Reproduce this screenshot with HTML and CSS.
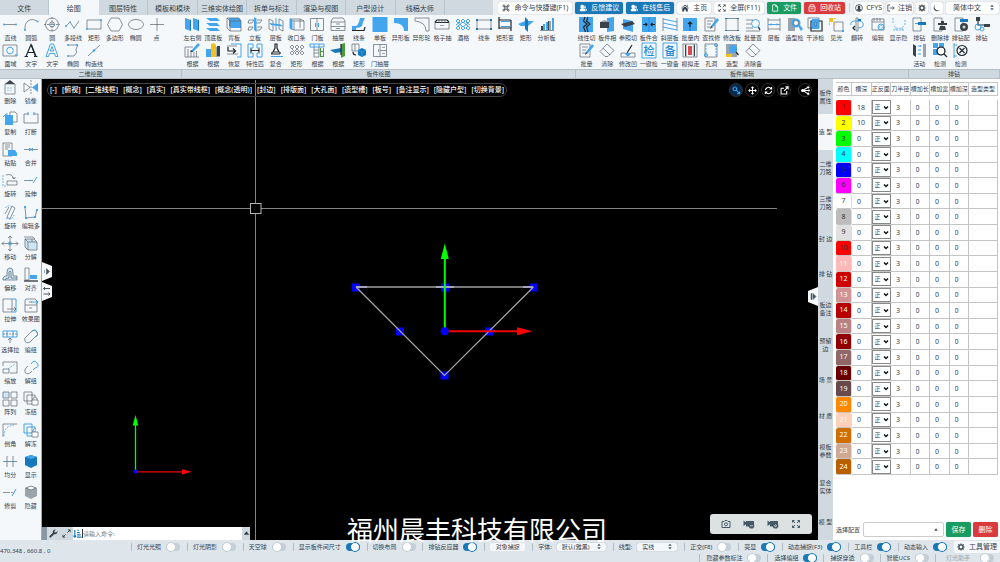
FILE: index.html
```html
<!DOCTYPE html>
<html lang="zh-CN">
<head>
<meta charset="utf-8">
<title>绘图</title>
<link rel="stylesheet" href="styles.css">
</head>
<body>
<div class="app">
  <header class="topbar">
    <nav class="tabs">
      <button class="tab">文件</button>
      <button class="tab tab-active">绘图</button>
      <button class="tab">图层特性</button>
      <button class="tab">模板和模块</button>
      <button class="tab">三维实体绘图</button>
      <button class="tab">拆单与标注</button>
      <button class="tab">渲染与视图</button>
      <button class="tab">户型设计</button>
      <button class="tab">线稿大师</button>
    </nav>
    <div class="actions">
      <button class="btn"><svg class="ico" viewBox="0 0 10 10"><path class="s" d="M3.500 3.500h3v3h-3zM3.500 3.500H2.300A1.200 1.200 0 1 1 3.500 2.300zM6.500 3.500V2.300A1.200 1.200 0 1 1 7.700 3.500zM6.500 6.500h1.200A1.200 1.200 0 1 1 6.500 7.700zM3.500 6.500v1.200A1.200 1.200 0 1 1 2.300 6.500z"/></svg>命令与快捷键(F1)</button>
      <button class="btn btn-blue"><svg class="ico" viewBox="0 0 10 10"><path class="f" d="M4.200 1a2 2.300 0 0 1 1.200 4.200L8 7v2H1V7l2-1.600A2.300 2.300 0 0 1 4.200 1zM7 2a1.600 1.800 0 0 1 .8 3.200L9.800 7v1.500H8.600V6.600L6.400 5z"/></svg>反馈建议</button>
      <button class="btn btn-blue"><svg class="ico" viewBox="0 0 10 10"><path class="f" d="M4.200 1a2 2.300 0 0 1 1.200 4.200L8 7v2H1V7l2-1.600A2.300 2.300 0 0 1 4.200 1zM7 2a1.600 1.800 0 0 1 .8 3.200L9.800 7v1.500H8.600V6.600L6.400 5z"/></svg>在线售后</button>
      <button class="btn"><svg class="ico" viewBox="0 0 10 10"><path class="f" d="M5 2.800 8.500 6v3.500H6V6.800H4v2.700H1.500V6z"/><path class="s" d="M.5 5.200 5 1.200l4.500 4M7.800 1v2.200"/></svg>主页</button>
      <button class="btn"><svg class="ico" viewBox="0 0 10 10"><path class="s" d="M1 3.300V1h2.300M1 1l3 3M9 3.300V1H6.700M9 1 6 4M1 6.700V9h2.300M1 9l3-3M9 6.700V9H6.700M9 9 6 6"/></svg>全屏(F11)</button>
      <button class="btn btn-green"><svg class="ico" viewBox="0 0 10 10"><path class="s" d="M2 1h4l2.300 2.300V9H2zM6 1v2.500h2.300"/></svg>文件</button>
      <button class="btn btn-red"><svg class="ico" viewBox="0 0 10 10"><path class="s" d="M1.200 3.500h7.600V9H1.200zM2.500 3.500V1h5v2.500M3 6h4"/></svg>回收站</button>
      <span class="divider"></span>
      <button class="btn btn-user"><svg class="ico" viewBox="0 0 10 10"><circle class="s" cx="5" cy="5" r="4.300"/><path class="f" d="M5 2a1.700 1.900 0 0 1 1 3.400L8 7.500Q5 10 2 7.500L4 5.400A1.700 1.900 0 0 1 5 2z"/></svg>CFYS</button>
      <button class="btn btn-user"><svg class="ico" viewBox="0 0 10 10"><path class="s" d="M4 1.200H1v7.600h3M3.500 5H9M7 3l2 2-2 2"/></svg>注销</button>
      <button class="btn btn-icon" aria-label="设置"><svg class="ico" viewBox="0 0 10 10"><circle class="s thick" cx="5" cy="5" r="2.600"/><path class="s thick" d="M5 .5v1.500M5 8v1.500M.5 5H2M8 5h1.500M1.800 1.800l1 1M7.200 7.200l1 1M1.800 8.200l1-1M7.200 2.800l1-1"/></svg></button>
      <button class="btn btn-icon" aria-label="夜间模式"><svg class="ico" viewBox="0 0 10 10"><path class="f" d="M3 1a3.800 3.800 0 0 0 6 5.500A4.300 4.300 0 1 1 3 1z"/></svg></button>
      <div class="pick pick-lang">
        <select aria-label="语言"><option>简体中文</option></select>
        <svg class="updown" viewBox="0 0 6 10"><path d="M3 1 5.500 4h-5zM3 9 5.500 6h-5z"/></svg>
      </div>
    </div>
  </header>

  <section class="ribbon">
    <div class="group group-2d">
      <div class="tools" id="tools-2d"></div>
      <h2 class="group-title">二维绘图</h2>
    </div>
    <div class="group group-board">
      <div class="tools" id="tools-board"></div>
      <h2 class="group-title">板件绘图</h2>
    </div>
    <div class="group group-edit">
      <div class="tools" id="tools-edit"></div>
      <h2 class="group-title">板件编辑</h2>
    </div>
    <div class="group group-drill">
      <div class="tools" id="tools-drill"></div>
      <h2 class="group-title">排钻</h2>
    </div>
  </section>

  <main class="workspace">
    <aside class="sidebar" id="sidebar"></aside>

    <section class="canvas">
      <svg class="drawing" viewBox="42 79 776 461" preserveAspectRatio="xMinYMin slice">
        <path class="cross" d="M255.500 80V203M255.500 214V540M42 208.500H250M261 208.500H777"/>
        <rect class="pickbox" x="250.500" y="203.500" width="10.500" height="10"/>
        <path class="grip" d="M352 283.500h8v8h-8zM529.500 283.500h8v8h-8zM441 283.500h8v8h-8zM396 327.500h8v8h-8zM485 327.500h8v8h-8zM440.500 371.500h8v8h-8z"/>
        <path class="edge-top" d="M356 287H533"/>
        <path class="edge-glow" d="M356 287H367M436 287H454M523 287H533"/>
        <path class="edge" d="M356 287 444.500 375.500 533.500 287"/>
        <path class="axis-y" d="M444.800 328V256"/>
        <path class="head-y" d="M444.800 243.500 448.800 259h-8z"/>
        <path class="axis-x" d="M448 331.300H518"/>
        <path class="head-x" d="M532.500 331.300 517 327.300v8z"/>
        <circle class="origin" cx="444.700" cy="331.300" r="4"/>
        <path class="axis-y thin" d="M135.500 471V424"/>
        <path class="head-y" d="M135.500 415 138.300 425.500h-5.600z"/>
        <path class="axis-x thin" d="M137 471.800H183"/>
        <path class="head-x" d="M192 471.800 182 469.200v5.200z"/>
        <circle class="origin" cx="135.500" cy="471.600" r="2.200"/>
      </svg>

      <div class="viewbar">
        <button>[-]</button><button>[俯视]</button><button>[二维线框]</button><button>[概念]</button><button>[真实]</button><button>[真实带线框]</button><button>[概念(透明)]</button><button>[封边]</button><button>[排版面]</button><button>[大孔面]</button><button>[造型槽]</button><button>[板号]</button><button>[备注显示]</button><button>[隐藏户型]</button><button>[切换背景]</button>
      </div>

      <div class="viewtools">
        <button class="round round-on" aria-label="选择"><svg viewBox="0 0 10 10"><circle cx="3.200" cy="3.200" r="2"/><path d="M4.700 4.700 8.500 8.500M8.500 6v2.500H6"/></svg></button>
        <button class="round" aria-label="平移"><svg viewBox="0 0 10 10"><path d="M5 1v8M1 5h8M3.800 2.200 5 1l1.200 1.200M3.800 7.800 5 9l1.200-1.200M2.200 3.800 1 5l1.200 1.200M7.800 3.800 9 5 7.800 6.200"/></svg></button>
        <button class="round" aria-label="旋转"><svg viewBox="0 0 10 10"><path d="M1.500 4.500A3.600 3.600 0 0 1 8 3M8.500 5.500A3.600 3.600 0 0 1 2 7M8.500 1v2.300H6.200M1.500 9V6.700h2.300"/></svg></button>
        <button class="round" aria-label="新窗口"><svg viewBox="0 0 10 10"><path d="M4.500 2.500H1.200v6.300h6.300V5.500M4.500 5.500 8.800 1.200M6 1h3v3"/></svg></button>
        <button class="round round-last" aria-label="分享"><svg viewBox="0 0 10 10"><path d="M2 5H8M2 5 7.500 1.500M2 5l5.500 3.500"/><circle class="dot" cx="1.800" cy="5" r="1.700"/><circle class="dot" cx="8" cy="1.500" r="1.300"/><circle class="dot" cx="8.700" cy="5" r="1.200"/><circle class="dot" cx="8" cy="8.500" r="1.300"/></svg></button>
      </div>

      <div class="handles-left">
        <button class="handle" aria-label="展开左侧"><svg viewBox="0 0 10 19"><path class="plate" d="M0 0 10 4v11L0 19z"/><path class="mark" d="M2.500 8v3M4.500 6.500v6L7.500 9.500z"/></svg></button>
        <button class="handle" aria-label="切换方向"><svg viewBox="0 0 10 19"><path class="plate" d="M0 0 10 4v11L0 19z"/><path class="mark-line" d="M1.500 6.500H8M3 5 1.500 6.500 3 8M1.500 12H8M6.500 10.500 8 12 6.500 13.500"/></svg></button>
      </div>
      <button class="handle handle-right" aria-label="展开右侧"><svg viewBox="0 0 10 19"><path class="plate" d="M10 0 0 4v11l10 4z"/><path class="mark" d="M3 6.500h1v6H3zM5 6.500v6L8 9.500z"/></svg></button>

      <div class="command">
        <span class="grab"></span>
        <button class="cmd-btn" aria-label="设置命令行"><svg viewBox="0 0 10 10"><path class="f" d="M9.300 2.300 7.800 3.800 6.300 3.500 6 2.100 7.500.7A2.700 2.700 0 0 0 4.300 4.200L.7 7.800A1 1 0 0 0 2.200 9.300L5.800 5.700A2.700 2.700 0 0 0 9.300 2.300z"/></svg></button>
        <button class="cmd-btn" aria-label="展开命令行"><svg viewBox="0 0 10 10"><path class="s" d="M6 4 9 1M6.500 1H9v2.500M4 6 1 9M1 6.500V9h2.500"/></svg></button>
        <div class="cmd-field">
          <svg viewBox="0 0 10 10"><path class="blue" d="M2 1v8M.5 7.500 2 9l1.500-1.500M4.500 9h5M4.500 6.500h4M4.500 4h3M5 1.500h1.500"/></svg>
          <input type="text" aria-label="命令" placeholder="请输入命令:">
        </div>
        <button class="cmd-up" aria-label="历史命令"><svg viewBox="0 0 10 10"><path class="f" d="M5 2.500 8 6.500H2z"/></svg></button>
      </div>

      <div class="camera">
        <button aria-label="拍照"><svg viewBox="0 0 12 10"><path class="s" d="M2 2.500h2l1-1h2l1 1h2v6H2z"/><circle class="s" cx="6" cy="5.300" r="1.500"/></svg></button>
        <button aria-label="开始录像"><svg viewBox="0 0 12 10"><path class="f" d="M3 2h8v3.500H6V7.500H3zM.5 1.500 3 3.200v2L.5 7z"/><circle class="f" cx="8.500" cy="6.800" r="2.800"/><path class="p" d="M7 6.800h3"/></svg></button>
        <button aria-label="录像设置"><svg viewBox="0 0 12 10"><path class="f" d="M3 2h8v3.500H6V7.500H3zM.5 1.500 3 3.200v2L.5 7z"/><circle class="f" cx="8.500" cy="6.800" r="2.800"/><circle class="p" cx="8.500" cy="6.800" r=".9"/></svg></button>
        <button aria-label="全屏画布"><svg viewBox="0 0 12 10"><path class="s" d="M2.500 3.500V1.500h2M2.500 1.500 5 4M9.500 3.500V1.500h-2M9.500 1.500 7 4M2.500 6.500v2h2M2.500 8.500 5 6M9.500 6.500v2h-2M9.500 8.500 7 6"/></svg></button>
      </div>
      <p class="caption">福州晨丰科技有限公司</p>
    </section>

    <nav class="side-tabs">
      <button class="side-tab">板件<br>属性</button>
      <button class="side-tab side-tab-active">造 型</button>
      <button class="side-tab">二维<br>刀路</button>
      <button class="side-tab">三维<br>刀路</button>
      <button class="side-tab">封 边</button>
      <button class="side-tab">排 钻</button>
      <button class="side-tab">板边<br>备注</button>
      <button class="side-tab">预留<br>边</button>
      <button class="side-tab">场 景</button>
      <button class="side-tab">材 质</button>
      <button class="side-tab">模板<br>参数</button>
      <button class="side-tab">复合<br>实体</button>
      <button class="side-tab">模 型</button>
    </nav>

    <section class="panel">
      <table class="grooves">
        <colgroup><col class="c-color"><col class="c-num"><col class="c-num"><col class="c-num"><col class="c-num"><col class="c-num"><col class="c-num"><col class="c-type"></colgroup>
        <thead><tr><th><span>颜色</span></th><th><span>槽深</span></th><th><span>正反面</span></th><th><span>刀半径</span></th><th><span>槽加长</span></th><th><span>槽加宽</span></th><th><span>槽加深</span></th><th><span>造型类型</span></th></tr></thead>
        <tbody id="groove-rows"></tbody>
      </table>
      <div class="config">
        <label for="config">选择配置</label>
        <div class="pick pick-config">
          <select id="config"><option></option></select>
          <svg class="updown" viewBox="0 0 10 10"><path d="M5 3 8 7H2z"/></svg>
        </div>
        <button class="btn btn-green btn-form">保存</button>
        <button class="btn btn-red btn-form">删除</button>
      </div>
    </section>
  </main>

  <footer class="status">
    <output class="coords">470.348 , 660.8 , 0</output>
    <div class="status-rows">
      <div class="status-row">
        <label class="opt">灯光光照<input type="checkbox" role="switch"></label>
        <label class="opt">灯光阴影<input type="checkbox" role="switch"></label>
        <label class="opt">天空球<input type="checkbox" role="switch"></label>
        <label class="opt">显示板件间尺寸<input type="checkbox" role="switch" checked></label>
        <label class="opt">切换布局<input type="checkbox" role="switch"></label>
        <label class="opt">排钻反应器<input type="checkbox" role="switch" checked></label>
        <div class="opt"><button class="snap">对象捕捉</button></div>
        <div class="opt"><label for="font">字体:</label>
          <div class="pick pick-font"><select id="font"><option>默认(雅黑)</option></select><svg class="updown" viewBox="0 0 6 10"><path d="M3 1 5.500 4h-5zM3 9 5.500 6h-5z"/></svg></div></div>
        <div class="opt"><label for="line">线型:</label>
          <div class="pick pick-line"><select id="line"><option>实线</option></select><svg class="updown" viewBox="0 0 6 10"><path d="M3 1 5.500 4h-5zM3 9 5.500 6h-5z"/></svg></div></div>
        <label class="opt">正交(F8)<input type="checkbox" role="switch"></label>
        <label class="opt">亮显<input type="checkbox" role="switch" checked></label>
        <label class="opt">动态捕捉(F3)<input type="checkbox" role="switch" checked></label>
        <label class="opt">工具栏<input type="checkbox" role="switch" checked></label>
        <label class="opt">动态输入<input type="checkbox" role="switch" checked></label>
        <button class="btn btn-manage"><svg class="ico" viewBox="0 0 10 10"><circle class="s thick" cx="5" cy="5" r="2.600"/><path class="s thick" d="M5 .5v1.500M5 8v1.500M.5 5H2M8 5h1.500M1.800 1.800l1 1M7.200 7.200l1 1M1.800 8.200l1-1M7.200 2.800l1-1"/></svg>工具管理</button>
      </div>
      <div class="status-row status-row-end">
        <label class="opt">隐藏参数标注<input type="checkbox" role="switch"></label>
        <label class="opt">选择编组<input type="checkbox" role="switch" checked></label>
        <label class="opt">捕捉穿透<input type="checkbox" role="switch"></label>
        <label class="opt">智能UCS<input type="checkbox" role="switch"></label>
        <label class="opt opt-off">灯光助手<input type="checkbox" role="switch" disabled></label>
      </div>
    </div>
  </footer>
</div>
<script src="app.js"></script>
</body>
</html>
```

FILE: styles.css
```css
* { box-sizing: border-box; }

body {
  margin: 0;
  font: 6px/8px "Noto Sans", "Noto Sans CJK SC", sans-serif;
  color: #34414c;
  background: #dee5eb;
}

button, select, input {
  margin: 0;
  padding: 0;
  border: 0;
  border-radius: 0;
  background: none;
  font: inherit;
  color: inherit;
}

button { white-space: nowrap; cursor: pointer; }
svg { display: block; overflow: visible; }
.s { fill: none; stroke: currentColor; stroke-width: 1; }
.thick { stroke-width: 1.5; }
.f { fill: currentColor; }

.app {
  display: grid;
  grid-template-rows: auto auto minmax(0, 1fr) auto;
  height: 100vh;
}

/* Top bar */
.topbar {
  display: flex;
  justify-content: space-between;
  height: 15px;
  background: #cfd9df;
  font-size: 7px;
  line-height: 10px;
}
.tabs { display: flex; flex: 0 1 445px; }
.tab { flex: 1; border-right: 1px solid #b9c5cc; padding-top: 2px; }
.tab-active { background: #f4f8fb; border-color: #f4f8fb; }
.actions { display: flex; align-items: center; gap: 3px; padding: 0 1px 0 50px; background: linear-gradient(90deg, #cfd9df 45px, #edf1f4 45px); }
.btn {
  display: flex;
  align-items: center;
  justify-content: center;
  gap: 4px;
  height: 12px;
  padding: 0 4px;
  border-radius: 2px;
  background: #fff;
  box-shadow: 0 0 1px #8b979f;
}
.ico { width: 8px; height: 8px; }
.btn-blue { background: #1978b8; color: #fff; }
.btn-green { background: #1a9c60; color: #fff; }
.btn-red { background: #db3a3d; color: #fff; }
.btn-user { padding: 0 1px; gap: 3px; }
.btn-icon { padding: 0 2px; }
.divider { width: 1px; height: 9px; margin: 0 1px; background: #c9d1d6; }

.pick { display: grid; align-items: center; background: #fff; border-radius: 2px; box-shadow: 0 0 1px #8b979f; }
.pick select { grid-area: 1 / 1; appearance: none; width: 100%; height: 100%; }
.updown { grid-area: 1 / 1; justify-self: end; width: 6px; height: 7px; margin-right: 4px; pointer-events: none; fill: #445460; }
.pick-lang { width: 53px; height: 12px; }
.pick-lang select { padding-left: 7px; }

/* Ribbon */
.ribbon { display: grid; grid-template-columns: 182fr 394fr 333fr 91fr; background: #f4f8fb; }
.tools {
  display: grid;
  grid-template-rows: 25px 25px;
  row-gap: 1px;
  height: 54px;
  padding-top: 2px;
}
.group-2d .tools { grid-template-columns: repeat(8, 1fr); padding-right: 15px; }
.group-board .tools { grid-template-columns: repeat(18, 1fr); padding-right: 19px; }
.group-edit .tools { grid-template-columns: repeat(16, 1fr); }
.group-drill .tools { grid-template-columns: repeat(4, 1fr); padding-right: 8px; }
.tool {
  display: flex;
  flex-direction: column;
  align-items: center;
  gap: 2px;
  min-width: 0;
}
.tool-first { grid-column-start: 1; }
.tool svg { flex: none; width: 16px; height: 15px; }
.group-title {
  margin: 0;
  height: 10px;
  border: solid #b4c0c7;
  border-width: 1px 1px 1px 0;
  background: #cfd9df;
  font-size: 6px;
  line-height: 8px;
  font-weight: 400;
  text-align: center;
}

/* Tool glyphs */
.k, .b, .d, .D, .l, .t { fill: none; stroke: #59646d; stroke-width: 0.7; }
.b { stroke: #349be4; stroke-width: 0.9; }
.t { stroke: #20272d; stroke-width: 1.2; }
.d { stroke: #349be4; stroke-dasharray: 2 1; }
.D { stroke-dasharray: 2 1; }
.l { fill: #cfe6f8; }
.B { fill: #42a5ee; }
.N { fill: #1579bc; }
.K { fill: #3a434a; }
.g { fill: #9aa4aa; }
.w { fill: #fff; stroke: #59646d; stroke-width: 0.7; }
.r { fill: #d94a4a; }
.y { fill: #f2c11f; }
.G { fill: #4c9a3f; }
.glyph { fill: #2288d2; font-size: 11px; font-weight: 500; text-anchor: middle; }

/* Workspace */
.workspace { display: grid; grid-template-columns: 42px minmax(0, 1fr) 15px 167px; min-height: 0; }
.sidebar {
  display: grid;
  grid-template-columns: 1fr 1fr;
  grid-auto-rows: 1fr;
  padding: 1px 0 24px;
  border-right: 1px solid #9faab1;
  background: #f4f8fb;
  overflow: hidden;
}

.canvas { position: relative; background: #000; min-height: 0; }
.drawing { position: absolute; inset: 0; width: 100%; height: 100%; }
.cross { fill: none; stroke: #858585; }
.pickbox { fill: #000; stroke: #b4b4b4; }
.grip, .origin { fill: #0000ff; }
.edge, .edge-top, .edge-glow { fill: none; stroke: #aaa; stroke-width: 1.2; }
.edge-top { stroke: #777; stroke-width: 2; }
.edge-glow { stroke: #d4d4ff; }
.axis-y { stroke: #00ff00; stroke-width: 2; }
.axis-x { stroke: #f00000; stroke-width: 2; }
.thin { stroke-width: 1.3; }
.head-y { fill: #00ff00; }
.head-x { fill: #ff0000; }

.viewbar {
  position: absolute;
  top: 4px;
  left: 5px;
  display: flex;
  align-items: center;
  gap: 5px;
  height: 14px;
  padding: 0 2px;
  border: 1px solid #444;
  border-radius: 7px;
  color: #fff;
  font-size: 7px;
  line-height: 10px;
  font-weight: 500;
}
.viewtools { position: absolute; top: 4px; right: 6px; display: flex; gap: 2px; }
.round {
  display: grid;
  place-items: center;
  width: 14px;
  height: 14px;
  border: 1px solid #333;
  border-radius: 50%;
}
.round svg { width: 9px; height: 9px; fill: none; stroke: #fff; stroke-width: 1.2; }
.round .dot { fill: #fff; stroke: none; }
.round-on { background: #08294a; }
.round-on svg { stroke: #39a2ee; }
.round-last { margin-left: 5px; }

.handles-left { position: absolute; top: 183px; left: 0; display: grid; gap: 1px; }
.handle svg { width: 10px; height: 19px; }
.handle-right { position: absolute; top: 208px; right: 0; }
.plate { fill: #f4f8fb; }
.mark { fill: #445460; stroke: #445460; stroke-width: 0.5; }
.mark-line { fill: none; stroke: #445460; }

.command {
  position: absolute;
  left: 0;
  bottom: 0;
  display: flex;
  align-items: stretch;
  width: 208px;
  height: 13px;
  background: #cfd9df;
}
.grab { width: 5px; background: #8798a4; }
.cmd-btn, .cmd-up { display: grid; place-items: center; width: 13px; }
.cmd-up { width: 8px; }
.command svg { width: 9px; height: 9px; }
.cmd-field { display: flex; flex: 1; align-items: center; background: #fff; }
.cmd-field input { flex: 1; min-width: 0; height: 9px; outline: 0; border-left: 1px solid #333; }
.cmd-field input::placeholder { color: #777; opacity: 1; }
.blue { fill: none; stroke: #1978b8; stroke-width: 1.3; }

.camera {
  position: absolute;
  right: 6px;
  bottom: 6px;
  display: flex;
  justify-content: space-around;
  align-items: center;
  width: 102px;
  height: 20px;
  padding: 0 4px;
  border-radius: 3px;
  background: #dce1e2;
  color: #445a68;
}
.camera svg { width: 12px; height: 10px; }
.p { fill: none; stroke: #dce1e2; stroke-width: 0.8; }
.caption {
  position: absolute;
  left: 305px;
  bottom: -2px;
  z-index: 2;
  margin: 0;
  color: #fff;
  font: 26px/26px "Noto Sans CJK SC", sans-serif;
  white-space: nowrap;
  pointer-events: none;
}

.side-tabs { display: grid; grid-auto-rows: 1fr; background: #cfd9df; }
.side-tab { min-height: 0; }
.side-tab-active { background: #f4f8fb; }

/* Groove table */
.panel { display: flex; flex-direction: column; justify-content: space-between; padding: 3px 2px 2px 3px; background: #fff; }
.grooves { width: 100%; height: 393px; table-layout: fixed; border-collapse: separate; border-spacing: 0; }
.c-color { width: 16px; }
.c-type { width: 29px; }
.grooves th, .grooves td { padding: 0; }
.grooves th { height: 18px; font-weight: 400; vertical-align: top; white-space: nowrap; }
.grooves th span { display: block; height: 14px; border: solid #c6c6c6; border-width: 1px 1px 1px 0; line-height: 13px; }
.grooves td { border: solid #c4c4c4; border-width: 0 1px 1px 0; font-size: 7px; line-height: 8px; }
.grooves .swatch { border-radius: 2px; border-right-color: #ddd; text-align: center; color: #333; }
.grooves .swatch-light { color: #fff; }
.grooves td input { display: block; width: 100%; height: 12px; padding-left: 5px; outline: 0; }
.side { display: grid; align-items: center; margin-right: -1px; border: 1px solid #888; }
.side select { grid-area: 1 / 1; appearance: none; width: 100%; height: 12px; padding-left: 2px; font-size: 6px; }
.side svg { grid-area: 1 / 1; justify-self: end; width: 6px; height: 5px; margin-right: 1px; pointer-events: none; fill: none; stroke: #111; stroke-width: 1.5; }

.config { display: flex; align-items: center; gap: 2px; height: 17px; }
.config label { width: 25px; white-space: nowrap; }
.pick-config { flex: 1; height: 15px; border: 1px solid #ccc; box-shadow: none; }
.btn-form { height: 15px; width: 25px; font-size: 7px; }

/* Status bar */
.status { display: flex; align-items: stretch; height: 22px; background: #dee5eb; }
.coords { flex: none; width: 131px; line-height: 22px; }
.status-rows { flex: 1; display: grid; grid-template-rows: 13px 9px; min-width: 0; }
.status-row { display: flex; align-items: center; justify-content: space-between; white-space: nowrap; }
.status-row-end { justify-content: flex-end; }
.opt { display: flex; align-items: center; gap: 5px; padding: 0 5px; border-left: 1px solid #b3bdc4; }
.opt input {
  appearance: none;
  display: flex;
  align-items: center;
  width: 14px;
  height: 8px;
  padding: 0;
  border-radius: 4px;
  background: #c3ced6;
}
.opt input::before { content: ""; width: 8px; height: 8px; border: 1px solid #c3ced6; border-radius: 50%; background: #fff; }
.opt input:checked { justify-content: flex-end; background: #1978b8; }
.opt input:checked::before { border-color: #1978b8; }
.status-row-end .opt { padding: 0 6px; }
.status-row-end .opt-off { padding-left: 10px; gap: 10px; color: #9ca8b0; }
.snap { width: 35px; height: 8px; border-radius: 2px; background: #f4f8fb; }
.pick-font, .pick-line { height: 8px; background: #f4f8fb; }
.pick-font { width: 49px; }
.pick-line { width: 40px; }
.pick-font select, .pick-line select { padding-left: 5px; line-height: 8px; }
.btn-manage { padding: 0 3px; font-size: 7px; box-shadow: none; background: #f4f8fb; }
```

FILE: app.js
```js
// Each glyph is a list of "class path" parts on a 16x15 grid.
// "@cx cy r" draws a circle, "T" draws a character.
const glyphs = {
  line: ["k M2 7.500H14", "B @2 7.500 1", "B @14 7.500 1"],
  arc: ["k M2 13C1 5 7 0 14 4", "B @2 13 1", "B @14.500 4.500 1"],
  circle: ["k @8 7.500 6.500", "k @8 7.500 2.500", "D M8 0V15M0 7.500H16", "B @8 7.500 .8"],
  poly: ["k M1 9 5 5 9 11 14 4", "B @1 9 1", "B @5 5 .8", "B @9 11 .8"],
  rect: ["k M1 3H15V12H1z", "B @1 12 1", "B @15 3 1"],
  hex: ["k M4 1H12L15.500 7.500 12 14H4L.5 7.500z"],
  ellipse: ["k M.5 7.500A7.500 5 0 0 1 15.500 7.500 7.500 5 0 0 1 .5 7.500"],
  point: ["k M8 1V14M1 7.500H15"],
  region: ["k M1 2H15V13H1z", "b @8 7.500 3.300", "B @14 12 1"],
  textA: ["t M3 13.500 8 1.500 13 13.500M5 9.500H11M1.500 13.500H5M11 13.500h3.500", "t M8.500 2 12.500 13.500"],
  textB: ["b M2 13.500 6.500 1H9.500L14 13.500H11.500L10.500 10.500H5.500L4.500 13.500zM6.200 8H9.800L8 3.500z"],
  curve: ["k M3 2H13L11 6Q13 10 9 13H3", "B @3 2 1", "B @12 2 1", "B @3 13 1"],
  xline: ["k M2 13 14 2", "B @8 7.500 1.300"],
  sides: ["B M1 1 7 3V14L1 12zM9 1 15 3V14L9 12z", "N M6 2.700 7 3V14L6 13.600zM14 2.700 15 3V14L14 13.600z"],
  shelves: ["B M1 1H12L15 4H5zM1 6H12L15 9H5zM1 11H12L15 14H5z"],
  back: ["B M3 1H13L15 4V11H5L3 9z", "k M1 1H13L15 4V14H4L1 11zM1 1 4 4H15M4 4V14"],
  stand: ["k M2 3H7L5 6H1zM10 3h5L13 6H9M2 10H6L4 13H1zM10 10h5l-2 3H9", "B M7 0 9.500 1.500V15L7 13z"],
  layer: ["k M1 2 5 4V14L1 12zM11 2 15 4V14L11 12z", "B M1 6 13 7.500 15 9.500 3 8z", "b M8 1V14"],
  closing: ["k M1 2H11L15 4V13H5L1 11zM5 4H15M5 4V13M1 2 5 4M11 2V11", "B M1 2 3.500 3V13L1 12z"],
  door: ["k M1.500 1.500H14.500V13.500H1.500zM8 1.500V13.500", "B M6 6H7V10H6zM9 6H10V10H9z"],
  drawer: ["k M3 1H13L15 4V13.500H1V4zM1 5H15M1 9.500H15M6 7H10M6 11.500H10"],
  mold: ["B M9 1H14L12 5 11 9Q9 11 5 11V13.500H1V9H5Q7 8 8 5z", "t M1 13.500H13L14 10"],
  single: ["B M.5 0H15.500V15H.5z"],
  shape: ["B M1 1H15V14H11Q11 6 1 6z"],
  shapeO: ["k M1 1H15V14H12Q12 5 1 4z"],
  grid: ["t M1 5 3 3H13L15 5M1 5.500H15", "k M1 5V12H15V5M5 2V6M8 2V6M11 2V6", "g M6 8H10V9H6z"],
  wine: ["b M1 4 3 2 5 4 3 6zM6 4 8 2 10 4 8 6zM11 4 13 2 15 4 13 6zM1 11 3 9 5 11 3 13zM6 11 8 9 10 11 8 13zM11 11 13 9 15 11 13 13zM3 6 8 10 13 6M1 8 5 5M15 8 11 5M3 9 8 5 13 9"],
  strip: ["k M1 3H15V12H1z", "N M0 2H2V4H0zM14 2H16V4H14zM0 11H2V13H0zM14 11H16V13H14z"],
  change: ["t M2 0V12M14 3V14M2 3H14M2 11H14", "B M4 4H13V5H4zM4 9H13V10H4z"],
  cross: ["B M0 7 7 4H16L10 9H3z", "N M7 0 10 3V15L7 12z"],
  chart: ["k M1 13.500H15", "B M4 7H6V13H4zM7 5H9V13H7zM13 1H15V13H13z", "K M2 9H4V13H2zM9 4H10V13H9z", "g M10 4H12V13H10z"],
  fig1: ["k M1 4V14H15M4 6V14M7 7V14M10 9V14M12.500 8V14M1 4H9", "B M7 8 14 0 16 2 9 9z", "K M6 9 8 7 9 9z"],
  fig2: ["B M1 6H6V14H1z", "y M6 1 9 0 11 2V14H6z", "g M11 4H15V14H11z", "K M12 3H15V13H12z"],
  restore: ["b M5 1H15V14H11", "k M1 3H11M1 11H12", "t M2 4V8H9M7 5.500 9.500 8 7 10.500"],
  match: ["b M6 1H1V14H6V10H3M10 1H15V14H10V10H13M6 1V5H3M10 1V5H13", "t M4 7.500H12M4 5.500V9.500M12 5.500V9.500"],
  compound: ["t M7 1H9L9 5 11 9H5L7 5zM3 11H12", "B M3 13H15V14H3z", "t M4 9V11M12 9V11"],
  mesh: ["k M1 4 3 2 5 4 3 6zM6 4 8 2 10 4 8 6zM11 4 13 2 15 4 13 6zM1 10 3 8 5 10 3 12zM6 10 8 8 10 10 8 12zM11 10 13 8 15 10 13 12zM3 6 5.500 8.500 8 6 10.500 8.500 13 6"],
  shelf1: ["b M1 1H15V4H1z", "k M5 4V14H10V4M5 7H10M5 10H10", "b M5 1V4M10 1V4", "G M11 5H12V14H11zM14 5H15V14H14zM12 8H14V9H12zM12 13H14V14H12z"],
  shelf2: ["G M11 1 15 0V13L11 15z", "N M0 7 11 5 12 9 5 10z", "t M11 1V12"],
  hang: ["k M1 1H8V8H1zM4 1V8", "N M7 7 11 5 15 7V12L11 14 7 12z", "b M7 7 11 9 15 7M11 9V14", "t M2 9Q2 12 5 12"],
  doordraw: ["k M1.500 1.500H14.500V13.500H1.500zM8 1.500V13.500M8 7.500H14.500", "g M6 6H7V9H6zM10 4H13V5H10zM10 10H13V11H10z"],
  cut: ["B M1 0H15V15H1z", "t M7 0 5.500 4 9 7 5.500 10 7.500 15M10 0 8.500 4 12 7 8.500 10 10 15"],
  cut2: ["B M8 1 15 0V14L8 15z", "g M1 5 5 3 10 4 8 6z", "K M1 5H10V11H1z"],
  cut3: ["B M3 2 13 4V15L3 12z", "K M1 7 12 4 15 7 5 10z"],
  join: ["B M1 0H15V15H1z", "t M2 7.500H6M4.500 6 6 7.500 4.500 9M14 7.500H10M11.500 6 10 7.500 11.500 9", "N M7.700 0H8.300V15H7.700z"],
  slant: ["k M1 1V14M15 1V14", "b M1 2 15 5M1 6 15 9M1 10 15 13"],
  inner: ["B M1 1H15V14H1z", "N M7.500 6H8.500V14H7.500z", "t M8 5V10M6 7 8 5 10 7"],
  find: ["k M2 1H12V14H2zM4 4H10M4 7H8M4 10H8", "B M8 9 14 1 16 3 10 10z", "K M7 12 8 9 10 10z"],
  modify: ["k M2 1.500H14V13.500H2z", "N M1 1H3V2H1zM13 1H15V2H13zM1 13H3V14H1zM13 13H15V14H13z"],
  search: ["k M1 3H8M1 7H6M1 11H8M1 14H15", "b @10.500 6.500 4", "t M13.500 10 15 13"],
  ply: ["k M2 1V14M14 1V14M2 3H14M2 12H14", "b M2 7.500H14", "B @5 7.500 1", "B @11 7.500 1"],
  erase: ["k M8 1 15 7.500 9 13.500H6L1 8.500zM4 5 11 12"],
  groove: ["k M1 10H5Q6 13 9 12L11 10H15V14H1z", "B M5 10H11L9 13H7z", "t M7 10 12 2"],
  jian: ["b M1 0H15V15H1z", "T 检"],
  bei: ["b M1 0H15V15H1z", "T 备"],
  sim: ["k M1 1H15V14H1zM4 1V14M12 1V14", "K M3 2H4V13H3zM12 2H13V13H12z", "r M6 3H10V12H6z"],
  hole: ["k M2 1H14V14H2z", "d M3 2V13M13 2V13", "b @3 12 1.500", "b @13 2 1.500"],
  shapeq: ["g M2 1H13V14H2z", "y M2 11H8V14H2z", "B @9 6 4", "t M12 9 14.500 12"],
  shapec: ["g M1 1H8V14H1z", "B @9 6 4.500", "w @9 6 2.500", "B M11 9 13 8 16 12 14 14z"],
  clash: ["k M1 1H12V11H1z", "t M4 4H15V14H4z", "B M5 2H12V12H5z", "w M8 5h1v4h-1z"],
  light: ["k M6 5H15V14H6z", "y M1 1H5V5H1zM6 1H8V2H6zM1 6H2V8H1zM5 5 8 7 7 8z", "B M14 13H16V15H14z"],
  flip: ["k M7 1H9V14H7z", "b M2 8Q1 4 6 4H11Q15 5 14 9Q13 11 9 11", "t M6 9 4 11 6 13", "N M9 2H12V4H9z"],
  edit: ["k M2 2H14V13H2zM2 5H14M4 1V4M7 1V4M10 1V4", "b @11 10 3", "d @11 10 1.500"],
  show: ["d M2 1V6M14 3V8M3 9Q8 14 13 9", "d M2 13H14M5 11V14M11 11V14"],
  drill: ["k M2 1H10V14H2z", "N M7 5H15V8H7z", "B M4 6H7V7H4z"],
  drilldel: ["k M2 1H10V14H2z", "K M6 6H15V8H6zM8 9H13L14 13H7zM9 4H12V6H9z"],
  drillset: ["k M2 1H10V14H2z", "N M7 2H15V5H7z", "K @11 10 4", "w @11 10 1.500"],
  drill3: ["K M2 0H6V4H2zM10 7H16V10H10z", "t M4 4V8H10", "b @4 10 3", "b @8 12 2"],
  active: ["K M2 1 5 3V14L2 12z", "g M12 1H15V14H12z", "b M7 3H10M7 7H10M7 11H10", "B M9 2 11 3 9 4z"],
  check1: ["B M1 0H6V5H1zM7 0H12V5H7zM1 6H6V12H1z", "w @9 8 4", "t @9 8 4", "t M12 11 15 14"],
  check2: ["b M1 0V15M1 2H4M1 13H4", "t @9 7.500 5", "t M6.500 5 11.500 10M11.500 5 6.500 10"],
  trash: ["K M3 4 8 0 13 4z", "k M3 4H13V14H3z", "d M6 7V11M9 7V11"],
  mirror: ["w M1 3 7 7.500 1 12z", "B M15 3 9 7.500 15 12z", "D M8 0V15"],
  copy: ["w M8 1H13L15 3V11H8z", "B M3 4H11V14H3z", "b M1 6 4 3H6"],
  brk: ["k M6 3H1V12H15V3H10", "b M5 1V4M11 1V4"],
  paste: ["k M1 1H10V14H1zM3 3H8M3 5H8M3 7H6", "B M6 8H13L15 11V14H6z"],
  merge: ["k M1 7.500H15", "b M6 6 8 7.500 6 9M10 6 8 7.500 10 9"],
  rot1: ["k M5 8H15V12H5zM4 2Q10 0 12 6M10 4 12 6 13.500 4", "d M1 2V13H4"],
  extend: ["k M1 7.500H10", "b M10 10 14 4", "B @7 7.500 .8"],
  rot2: ["k M5 12 10 1 13 3 8 14zM3 9 7 2", "d M4 13Q10 16 12 10M3 3Q6 0 9 1"],
  multi: ["k M2 2 3 13 12 12 14 5", "B M1 1H3V3H1zM2 12H4V14H2zM11 11H13V13H11zM13 4H15V6H13z"],
  move: ["k M8 0V15M0 7.500H16M6 2 8 0 10 2M6 13 8 15 10 13M2 5.500 0 7.500 2 9.500M14 5.500 16 7.500 14 9.500", "b @8 7.500 1.500"],
  explode: ["l M2 3H11L14 6V14H5L2 11z", "k M2 3 5 6H14M5 6V14M1 1H10L12 3M9 3V6"],
  offset: ["l M1 11Q3 8 5 9V5Q5 1 8 1T11 5V9H15V13H1z", "k M3 13Q3 11 7 11V5Q8 3 9 5V11H15"],
  align: ["k M2 1H6V13H2z", "B M7 8H14V12H7z", "t M1 14H15"],
  stretch: ["k M1 1H10V14H1z", "b M10 1H14V14H10", "k M5 11H14M12 9 14 11 12 13"],
  fx: ["k M3 1H12L14 3V14H2V2zM2 7H14M6 4H9M6 10H9", "b M8 4H15M13 2 15 4 13 6"],
  pick: ["b M1 2H15V8H1zM5 2V8M11 2V8", "D M1 5H15", "k M8 14V9M6 11 8 9 10 11"],
  group: ["k M3 8 9 2Q12 0 14 3T12 8L7 13Q3 15 2 12T3 8", "b M8 3Q12-1 14 3T12 8"],
  scale: ["k M1 6V2H15V13H8M1 9H7V13H1z", "d M6 9 13 4"],
  ungroup: ["k M3 8 5 6M2 12Q3 15 7 13L9 11M3 8Q1 10 2 12", "b M8 4Q11-1 14 3T12 8L10 10"],
  array: ["l M1 1H7V7H1z", "k M9 1H15V7H9zM1 9H7V15H1zM9 9H15V15H9z"],
  freeze: ["k M1 1H9V10H1zM4 4H12V13H4z", "w M9 9H15V14H9zM10 9V7Q12 5 14 7V9"],
  fillet: ["k M1 14V1H15", "d M2 13Q2 3 12 2"],
  thaw: ["b M1 1H9V10H1zM4 4H12V13H4z", "w M9 9H15V14H9zM10 9V7Q12 5 13 6"],
  divide: ["k M1 7.500H15M5 2V13M11 2V13", "b M3 7.500H5M11 7.500H13"],
  visible: ["N M2 3 8 1 14 3V11L8 14 2 11z", "B M2 3 8 1 14 3 8 5z"],
  trim: ["k M1 7.500H8M9 7.500H11", "b M10 11 14 4"],
  hidden: ["g M2 3 8 1 14 3V11L8 14 2 11z", "w M3 3 8 1 13 3 8 5z"]
};

const toolSets = {
  "tools-2d": [
    "line直线 arc圆弧 circle圆 poly多段线 rect矩形 hex多边形 ellipse椭圆 point点",
    "region面域 textA文字 textB文字 curve椭圆 xline构造线"
  ],
  "tools-board": [
    "sides左右侧 shelves顶底板 back背板 stand立板 layer层板 closing收口条 door门板 drawer抽屉 mold线条 single单板 shape异形板 shapeO异形轮 grid格子抽 wine酒格 strip线条 change矩形变 cross矩形 chart分析板",
    "fig1根据 fig2根据 restore恢复 match特性匹 compound复合 mesh矩形 shelf1根据 shelf2根据 hang矩形 doordraw门抽屉"
  ],
  "tools-edit": [
    "cut线性切 cut2板件相 cut3参照切 join板件合 slant斜层板 inner批量内 find查找修 modify修改板 search批量查 ply层板 shapec造型检 clash干涉检 light见光 flip翻转 edit编辑 show显示隐",
    "find批量 erase清除 groove修改凹 jian一键检 bei一键备 sim模拟走 hole孔洞 shapeq造型 erase清除备"
  ],
  "tools-drill": [
    "drill排钻 drilldel删除排 drillset排钻配 drill3排钻",
    "active活动 check1检测 check2检测"
  ],
  sidebar: [
    "trash删除 mirror镜像 copy复制 brk打断 paste粘贴 merge合并 rot1旋转 extend延伸 rot2旋转 multi编辑多 move移动 explode分解 offset偏移 align对齐 stretch拉伸 fx效果图 pick选择拉 group编组 scale缩放 ungroup解组 array阵列 freeze冻结 fillet倒角 thaw解冻 divide均分 visible显示 trim修剪 hidden隐藏"
  ]
};

function glyphMarkup(name) {
  const parts = glyphs[name].map(part => {
    const cls = part[0];
    const data = part.slice(2);
    if (cls === "T") return `<text class="glyph" x="8" y="11.500">${data}</text>`;
    if (data[0] === "@") {
      const [cx, cy, r] = data.slice(1).split(" ");
      return `<circle class="${cls}" cx="${cx}" cy="${cy}" r="${r}"/>`;
    }
    return `<path class="${cls}" d="${data}"/>`;
  });
  return `<svg viewBox="0 0 16 15">${parts.join("")}</svg>`;
}

for (const [id, rows] of Object.entries(toolSets)) {
  document.getElementById(id).innerHTML = rows.map(row =>
    row.split(" ").map((entry, i) => {
      const [, name, label] = entry.match(/^([A-Za-z0-9]+)(.+)$/);
      return `<button class="tool${i === 0 ? " tool-first" : ""}">${glyphMarkup(name)}<span>${label}</span></button>`;
    }).join("")
  ).join("");
}

const swatches = [
  "#ff0000", "#ffff00", "#00ff00", "#00ffff", "#0000ff", "#ff00ff", "#ffffff", "#bcbcbc",
  "#e0e0e0", "#ff0000", "#ffb8b8", "#d00000", "#d09494", "#b80000", "#b88282", "#900000",
  "#906666", "#680000", "#684a4a", "#ff8800", "#ffd0b8", "#d06e00", "#d0a894", "#b86000"
];
const depths = [18, 10];

document.getElementById("groove-rows").innerHTML = swatches.map((color, i) => {
  const n = i + 1;
  const field = (name, value) => `<td><input type="text" aria-label="${name} ${n}" value="${value}"></td>`;
  return `<tr>
    <td class="swatch${n > 10 ? " swatch-light" : ""}" style="background:${color}">${n}</td>
    ${field("槽深", depths[i] || 0)}
    <td><div class="side"><select aria-label="正反面 ${n}"><option>正</option><option>反</option></select><svg viewBox="0 0 6 5"><path d="M1 1.500 3 3.500 5 1.500"/></svg></div></td>
    ${field("刀半径", 3)}${field("槽加长", 0)}${field("槽加宽", 0)}${field("槽加深", 0)}${field("造型类型", "")}
  </tr>`;
}).join("");
```
